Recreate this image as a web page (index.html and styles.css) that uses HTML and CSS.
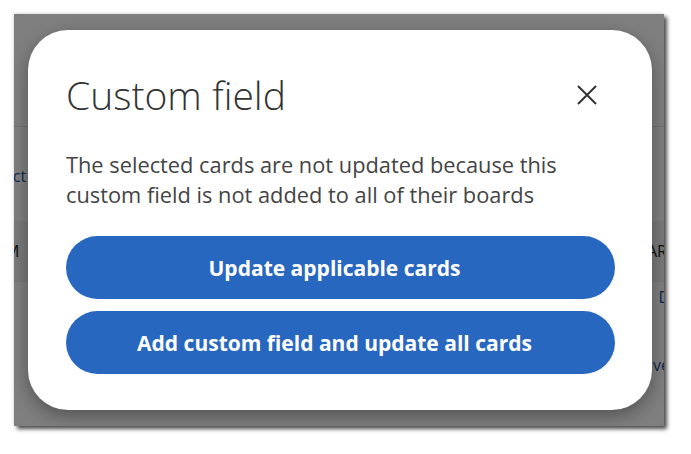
FILE: index.html
```html
<!DOCTYPE html>
<html lang="en">
<head>
    <meta charset="UTF-8">
    <meta name="viewport" content="width=device-width, initial-scale=1.0">
    <title>Custom field</title>
    <link rel="stylesheet" href="styles.css">
</head>
<body>
    <div class="frame">
        <div class="page">
            <div class="page-header"></div>
            <div class="toolbar">
                <span class="link left-link">Select</span>
            </div>
            <div class="table-head">
                <span class="col-left">M</span>
                <span class="col-right">AR</span>
            </div>
            <div class="table-row">
                <span class="link right-link">D</span>
            </div>
            <div class="table-row tall">
                <span class="link right-link">ve</span>
            </div>
        </div>

        <div class="overlay">
            <div class="modal">
                <div class="modal-head">
                    <h2>Custom field</h2>
                    <button class="close-btn" aria-label="Close">
                        <svg width="20" height="20" viewBox="0 0 20 20">
                            <path d="M1 1 L19 19 M19 1 L1 19" stroke="#333" stroke-width="2" fill="none"/>
                        </svg>
                    </button>
                </div>
                <p class="message">The selected cards are not updated because this custom field is not added to all of their boards</p>
                <div class="actions">
                    <button class="primary-btn">Update applicable cards</button>
                    <button class="primary-btn">Add custom field and update all cards</button>
                </div>
            </div>
        </div>
    </div>
</body>
</html>
```

FILE: styles.css
```css
body {
    margin: 0;
    padding: 0;
    background-color: #fff;
    font-family: "Open Sans", Arial, sans-serif;
}
.frame {
    position: relative;
    margin: 14px;
    width: 650px;
    height: 412px;
    overflow: hidden;
    background: #fff;
    box-shadow: 3px 3px 4px rgba(0,0,0,0.7), -1px -1px 3px rgba(0,0,0,0.1);
}
.page {
    display: flex;
    flex-direction: column;
    font-size: 16px;
    color: #222;
}
.page-header {
    height: 112px;
    border-bottom: 1px solid #e4e4e4;
}
.toolbar {
    display: flex;
    height: 94px;
    padding-top: 38px;
    box-sizing: border-box;
}
.link {
    color: #1f4fa0;
}
.left-link {
    margin-left: -32px;
}
.right-link {
    margin-right: -6px;
}
.table-head {
    display: flex;
    justify-content: space-between;
    align-items: center;
    height: 60px;
    background: #f2f2f2;
    border-bottom: 1px solid #ececec;
}
.col-left {
    margin-left: -9px;
}
.col-right {
    margin-right: -3px;
}
.table-row {
    display: flex;
    justify-content: flex-end;
    align-items: center;
    height: 30px;
}
.table-row.tall {
    height: 140px;
    align-items: flex-start;
    padding-top: 42px;
    box-sizing: border-box;
}
.overlay {
    position: absolute;
    inset: 0;
    background: rgba(0,0,0,0.5);
    display: flex;
    align-items: center;
    justify-content: center;
}
.modal {
    width: 624px;
    height: 380px;
    margin-left: 2px;
    box-sizing: border-box;
    padding: 40px 37px 0 38px;
    background: #fff;
    border-radius: 40px;
    box-shadow: 0 6px 18px rgba(0,0,0,0.35);
}
.modal-head {
    display: flex;
    justify-content: space-between;
    align-items: center;
}
.modal-head h2 {
    margin: 0;
    font-size: 39px;
    font-weight: 300;
    line-height: 50px;
    color: #333;
}
.close-btn {
    background: none;
    border: none;
    padding: 0;
    margin-right: 18px;
    width: 20px;
    height: 20px;
    cursor: pointer;
}
.message {
    margin: 30px 0 26px;
    font-size: 21.8px;
    line-height: 30px;
    color: #444;
}
.actions {
    display: flex;
    flex-direction: column;
    gap: 12px;
}
.primary-btn {
    height: 63px;
    padding: 0 12px 0 0;
    border: none;
    border-radius: 32px;
    background: #2867c0;
    color: #fff;
    font-family: "Open Sans", Arial, sans-serif;
    font-size: 21px;
    font-weight: 700;
    cursor: pointer;
}
```
